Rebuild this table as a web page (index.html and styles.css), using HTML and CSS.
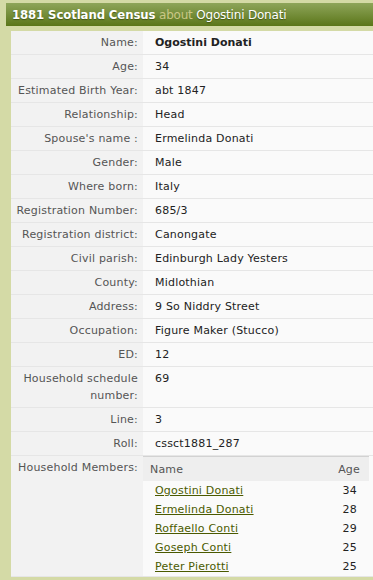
FILE: index.html
```html
<!DOCTYPE html>
<html>
<head>
<meta charset="utf-8">
<link rel="stylesheet" href="styles.css">
</head>
<body>
<div class="page">
  <h1 class="title"><span class="t-main">1881 Scotland Census</span> <span class="t-about">about</span> <span class="t-name">Ogostini Donati</span></h1>
  <table class="record">
    <tr><th>Name:</th><td><b>Ogostini Donati</b></td></tr>
    <tr><th>Age:</th><td>34</td></tr>
    <tr><th>Estimated Birth Year:</th><td>abt 1847</td></tr>
    <tr><th>Relationship:</th><td>Head</td></tr>
    <tr><th>Spouse's name :</th><td>Ermelinda Donati</td></tr>
    <tr><th>Gender:</th><td>Male</td></tr>
    <tr><th>Where born:</th><td>Italy</td></tr>
    <tr><th>Registration Number:</th><td>685/3</td></tr>
    <tr><th>Registration district:</th><td>Canongate</td></tr>
    <tr><th>Civil parish:</th><td>Edinburgh Lady Yesters</td></tr>
    <tr><th>County:</th><td>Midlothian</td></tr>
    <tr><th>Address:</th><td>9 So Niddry Street</td></tr>
    <tr><th>Occupation:</th><td>Figure Maker (Stucco)</td></tr>
    <tr><th>ED:</th><td>12</td></tr>
    <tr><th>Household schedule number:</th><td>69</td></tr>
    <tr><th>Line:</th><td>3</td></tr>
    <tr><th>Roll:</th><td>cssct1881_287</td></tr>
    <tr class="hh"><th>Household Members:</th><td class="hh-cell">
      <table class="members">
        <tr class="mh"><th class="mn">Name</th><th class="ma">Age</th></tr>
        <tr><td class="mn"><a href="#">Ogostini Donati</a></td><td class="ma">34</td></tr>
        <tr><td class="mn"><a href="#">Ermelinda Donati</a></td><td class="ma">28</td></tr>
        <tr><td class="mn"><a href="#">Roffaello Conti</a></td><td class="ma">29</td></tr>
        <tr><td class="mn"><a href="#">Goseph Conti</a></td><td class="ma">25</td></tr>
        <tr><td class="mn"><a href="#">Peter Pierotti</a></td><td class="ma">25</td></tr>
      </table>
    </td></tr>
  </table>
</div>
</body>
</html>
```
FILE: styles.css
```css
html, body {
  margin: 0;
  padding: 0;
  background: #d4daa6;
}
.page {
  padding-top: 3px;
  font-family: "DejaVu Sans", Verdana, sans-serif;
  font-size: 11px;
  letter-spacing: 0.2px;
}
.title {
  margin: 0 0 5px 6px;
  height: 23px;
  line-height: 23px;
  padding-left: 6px;
  background: linear-gradient(#8ea55a, #5b7619);
  font-family: "DejaVu Sans", sans-serif;
  font-size: 12px;
  font-weight: normal;
  letter-spacing: -0.2px;
  color: #fff;
  white-space: nowrap;
  text-shadow: 0 1px 1px rgba(40, 55, 0, 0.6);
}
.t-main {
  font-family: "DejaVu Sans Condensed", "DejaVu Sans", sans-serif;
  font-weight: bold;
  font-size: 13px;
  letter-spacing: -0.1px;
}
.t-about {
  color: #c9c786;
  text-shadow: none;
}
.record {
  margin-left: 11px;
  width: calc(100% - 11px);
  border-collapse: collapse;
  background: #fafafa;
}
.record > tbody > tr > th,
.record > tbody > tr > td {
  padding: 3px 0;
  line-height: 17px;
  border-bottom: 1px solid #e6e6e6;
  vertical-align: top;
}
.record > tbody > tr > th {
  width: 127px;
  padding-right: 5px;
  text-align: right;
  font-weight: normal;
  color: #555;
  background: #f2f2f2;
}
.record > tbody > tr > td {
  padding-left: 12px;
  color: #222;
}
.record b {
  color: #222;
  letter-spacing: 0;
}
.record > tbody > tr > td.hh-cell {
  padding: 0;
}
.members {
  width: 226px;
  border-collapse: collapse;
  border-top: 1px solid #d2d2d2;
}
.members .mh th {
  background: #eeeeee;
  font-weight: normal;
  color: #555;
  line-height: 17px;
  padding: 4px 0 3px;
}
.members .mh th.mn {
  text-align: left;
  padding-left: 7px;
}
.members .mh th.ma {
  text-align: right;
  padding-right: 9px;
}
.members td {
  line-height: 17px;
  padding: 1px 0;
  color: #222;
}
.members td.mn {
  padding-left: 12px;
}
.members td.ma {
  text-align: right;
  padding-right: 12px;
}
.members a {
  color: #4a5a00;
  text-decoration: underline;
}
```
